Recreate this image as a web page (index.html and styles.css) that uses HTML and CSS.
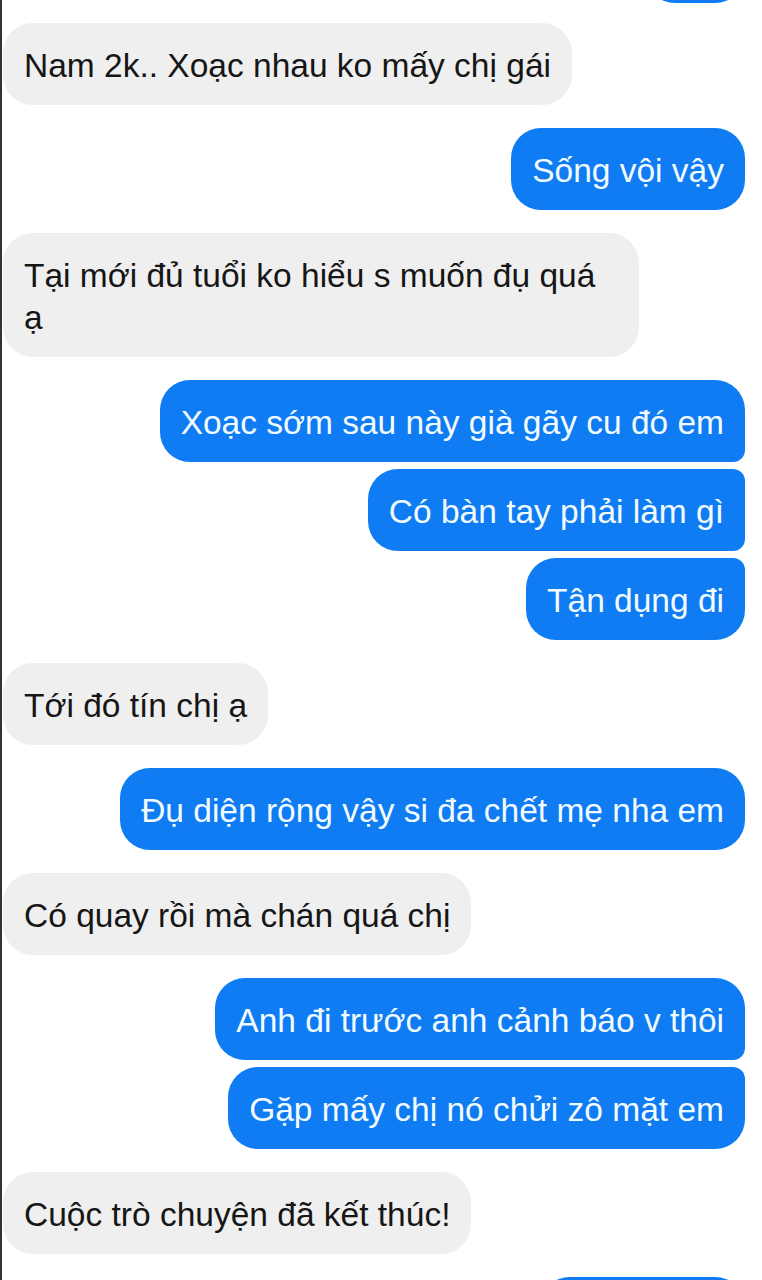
FILE: index.html
```html
<!DOCTYPE html>
<html lang="vi">
<head>
<meta charset="utf-8">
<title>Chat</title>
<link rel="stylesheet" href="styles.css">
</head>
<body>
<div class="screen">
  <div class="chat">
    <div class="row out peek-top"><div class="bubble blue peek"></div></div>
    <div class="row in first"><div class="bubble gray">Nam 2k.. Xoạc nhau ko mấy chị gái</div></div>
    <div class="row out"><div class="bubble blue">Sống vội vậy</div></div>
    <div class="row in"><div class="bubble gray">Tại mới đủ tuổi ko hiểu s muốn đụ quá ạ</div></div>
    <div class="row out"><div class="bubble blue g-first">Xoạc sớm sau này già gãy cu đó em</div></div>
    <div class="row out tight"><div class="bubble blue g-mid">Có bàn tay phải làm gì</div></div>
    <div class="row out tight"><div class="bubble blue g-last">Tận dụng đi</div></div>
    <div class="row in"><div class="bubble gray">Tới đó tín chị ạ</div></div>
    <div class="row out"><div class="bubble blue">Đụ diện rộng vậy si đa chết mẹ nha em</div></div>
    <div class="row in"><div class="bubble gray">Có quay rồi mà chán quá chị</div></div>
    <div class="row out"><div class="bubble blue g-first">Anh đi trước anh cảnh báo v thôi</div></div>
    <div class="row out tight"><div class="bubble blue g-last">Gặp mấy chị nó chửi zô mặt em</div></div>
    <div class="row in"><div class="bubble gray">Cuộc trò chuyện đã kết thúc!</div></div>
    <div class="row out peek-bottom"><div class="bubble blue peek wide"></div></div>
  </div>
</div>
</body>
</html>
```

FILE: styles.css
```css
html, body {
  margin: 0;
  padding: 0;
  background: #ffffff;
}

.screen {
  width: 762px;
  height: 1280px;
  overflow: hidden;
  box-sizing: border-box;
  border-left: 2px solid #333333;
  background: #ffffff;
  font-family: "Liberation Sans", Arial, sans-serif;
}

.chat {
  display: flex;
  flex-direction: column;
  margin-top: -79px;
}

.row {
  display: flex;
  margin-top: 23px;
}

.row.first {
  margin-top: 20px;
}

.row.tight {
  margin-top: 7px;
}

.row.in {
  justify-content: flex-start;
  padding-left: 1px;
}

.row.out {
  justify-content: flex-end;
  padding-right: 17px;
}

.row.peek-top {
  margin-top: 0;
}

.bubble {
  box-sizing: border-box;
  max-width: 636px;
  padding: 22px 21px 18px;
  font-size: 33.5px;
  line-height: 42px;
  border-radius: 30px;
}

.gray {
  background: #efefef;
  color: #161616;
}

.blue {
  background: #0f7cf3;
  color: #f2fbff;
}

.g-first {
  border-bottom-right-radius: 12px;
}

.g-mid {
  border-top-right-radius: 12px;
  border-bottom-right-radius: 12px;
}

.g-last {
  border-top-right-radius: 12px;
}

.peek {
  width: 100px;
  height: 82px;
}

.peek.wide {
  width: 205px;
}
```
